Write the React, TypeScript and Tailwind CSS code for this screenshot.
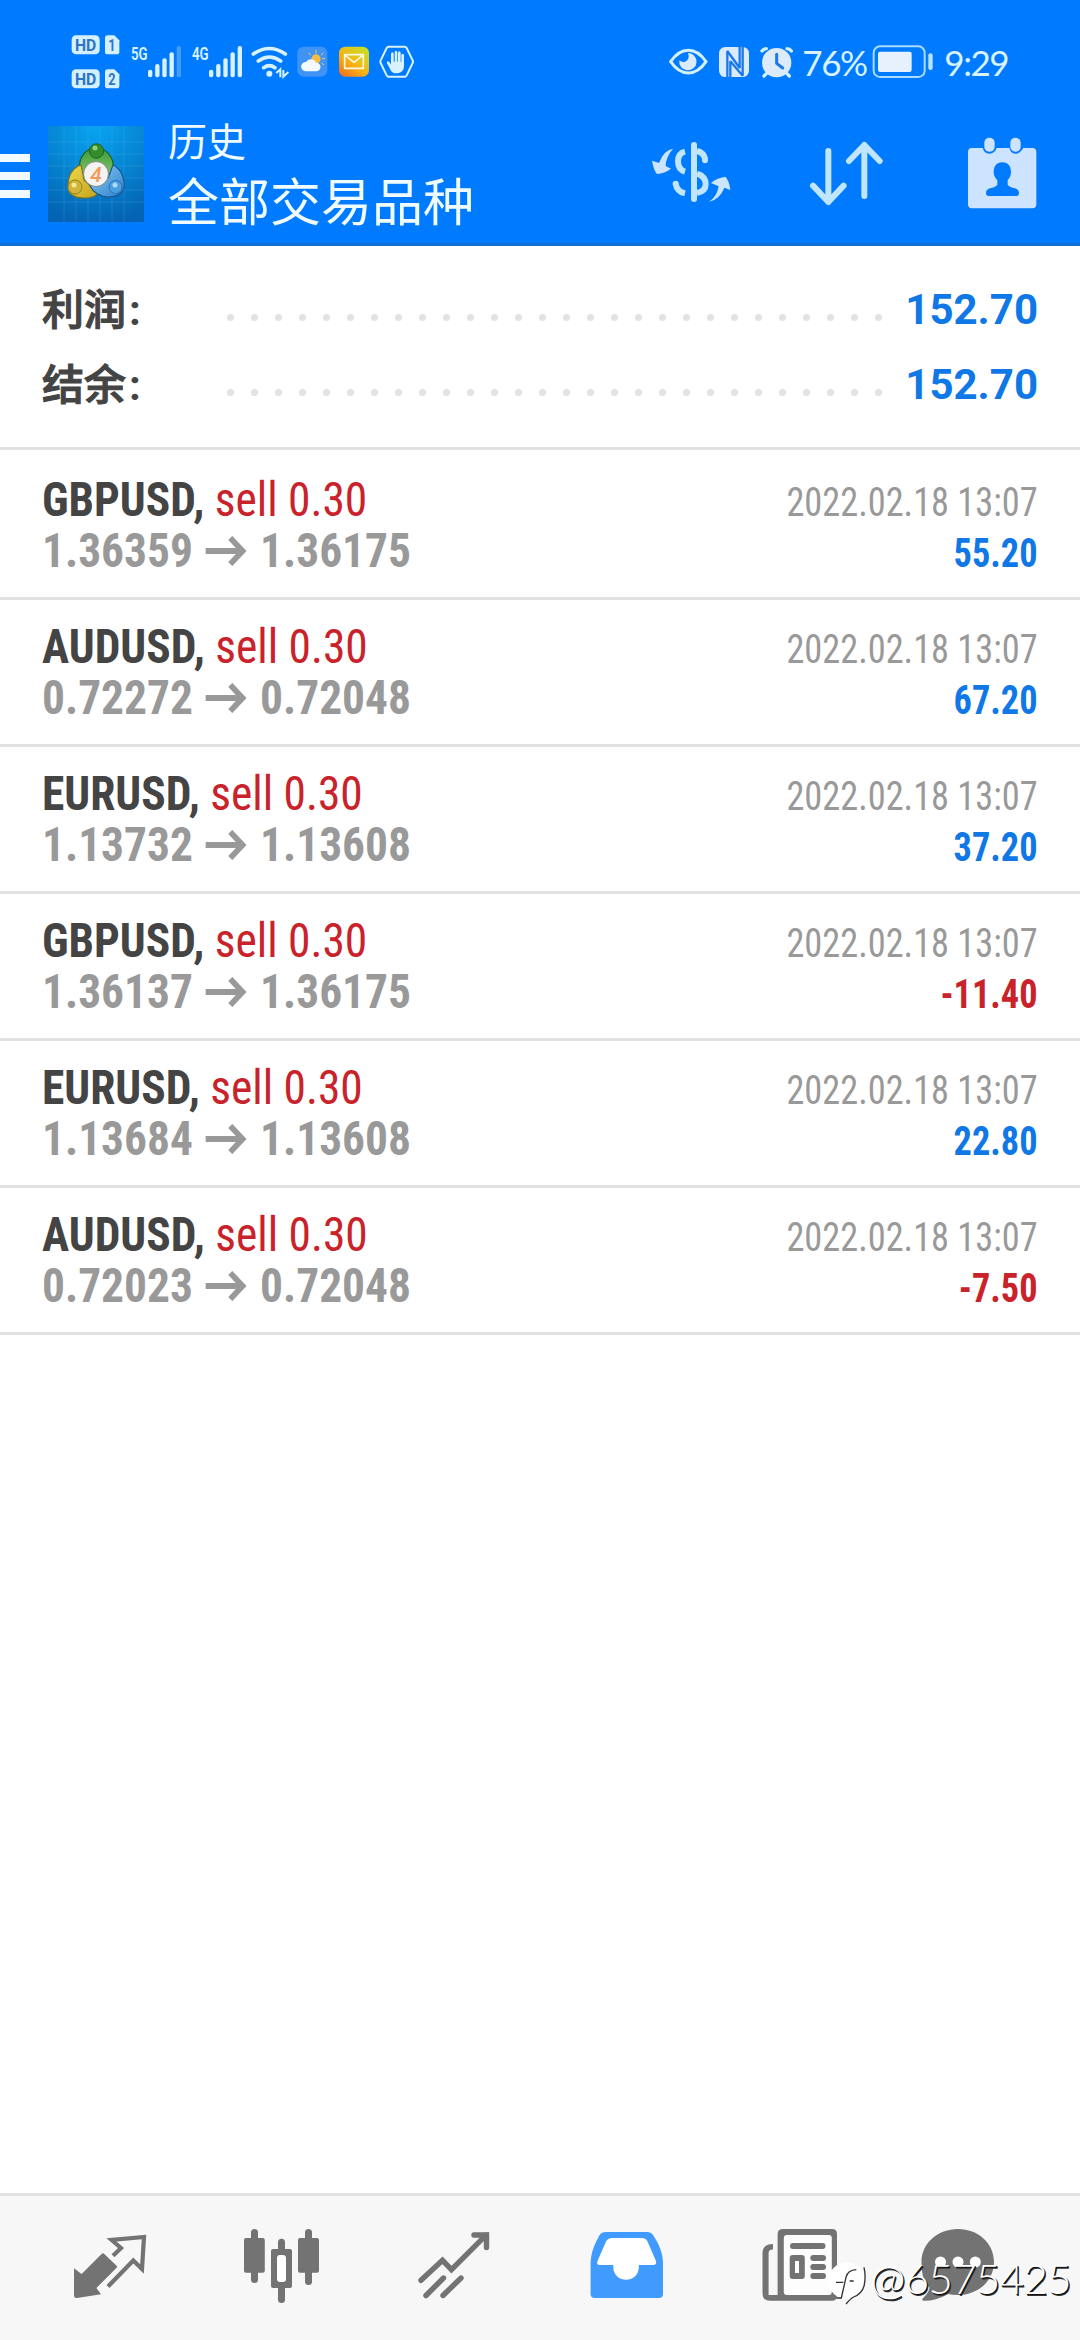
import React from "react";

interface Deal {
  symbol: string;
  volume: string;
  open: string;
  close: string;
  time: string;
  profit: string;
}

const deals: Deal[] = [
  { symbol: "GBPUSD", volume: "0.30", open: "1.36359", close: "1.36175", time: "2022.02.18 13:07", profit: "55.20" },
  { symbol: "AUDUSD", volume: "0.30", open: "0.72272", close: "0.72048", time: "2022.02.18 13:07", profit: "67.20" },
  { symbol: "EURUSD", volume: "0.30", open: "1.13732", close: "1.13608", time: "2022.02.18 13:07", profit: "37.20" },
  { symbol: "GBPUSD", volume: "0.30", open: "1.36137", close: "1.36175", time: "2022.02.18 13:07", profit: "-11.40" },
  { symbol: "EURUSD", volume: "0.30", open: "1.13684", close: "1.13608", time: "2022.02.18 13:07", profit: "22.80" },
  { symbol: "AUDUSD", volume: "0.30", open: "0.72023", close: "0.72048", time: "2022.02.18 13:07", profit: "-7.50" },
];

const totals = [
  { label: "利润", value: "152.70" },
  { label: "结余", value: "152.70" },
];

function SimBadge({ slot }: { slot: string }) {
  return (
    <svg className="overflow-visible" width="49" height="20" viewBox="0 0 147 60">
      <rect x="2" y="1" width="84" height="57" rx="13" fill="#d3f0ff" />
      <text x="44" y="49" textAnchor="middle" fontSize="52" fontWeight="700" textLength="64" lengthAdjust="spacingAndGlyphs" fill="#2f74c8">HD</text>
      <path d="M110 1h20l15 15v34q0 8-8 8h-27q-8 0-8-8V9q0-8 8-8z" fill="#d3f0ff" />
      <text x="123" y="47" textAnchor="middle" fontSize="48" fontWeight="700" textLength="22" lengthAdjust="spacingAndGlyphs" fill="#2f74c8">{slot}</text>
    </svg>
  );
}

function Signal({ label, level }: { label: string; level: number }) {
  const tops = [74, 57, 40, 22, 3];
  return (
    <svg className="overflow-visible" width="52" height="34" viewBox="0 0 156 102">
      <text x="0" y="45" fontSize="56" fontWeight="600" textLength="50" lengthAdjust="spacingAndGlyphs" fill="#d8f3ff">{label}</text>
      {tops.map((top, i) => (
        <rect key={i} x={51 + i * 21.5} y={top} width="13" height={97 - top} rx="6" fill="#d8f3ff" opacity={i < level ? 1 : 0.3} />
      ))}
    </svg>
  );
}

function StatusBar() {
  return (
    <div className="flex h-[110px] items-center pt-[14px] pr-[72px] pl-[71px] font-['Lato','Noto_Sans',sans-serif] text-[#d8f3ff]">
      <div className="flex flex-col gap-[14px] font-['Roboto',sans-serif]">
        <SimBadge slot="1" />
        <SimBadge slot="2" />
      </div>
      <div className="ml-[11px] flex gap-[9px] font-['Roboto',sans-serif]">
        <Signal label="5G" level={4} />
        <Signal label="4G" level={5} />
      </div>
      {/* wifi */}
      <svg className="ml-[7px]" width="39" height="34" viewBox="602 73 117 102" fill="none" stroke="#d8f3ff" strokeWidth="11" strokeLinecap="round">
        <path d="M609 100q48-33 96 0M624 121q33-24 67 0M640 141q17-12 34 0" />
        <circle cx="657" cy="159" r="9" fill="#d8f3ff" stroke="none" />
        <path d="M678 157l12-11v24M699 148v20l15-14" strokeWidth="6" strokeLinecap="butt" />
      </svg>
      {/* weather */}
      <svg className="ml-[7px]" width="31" height="34" viewBox="740 73 93 102">
        <rect x="741" y="78" width="90" height="90" rx="19" fill="#3f93f5" />
        <g stroke="#f3c85a" strokeWidth="3" strokeLinecap="round">
          <path d="M797 89v8M776 97l5 6M818 97l-5 6M823 114h-7M820 132l-6-4" />
        </g>
        <circle cx="797" cy="115" r="14" fill="#f6bd45" />
        <path d="M766 152a14 14 0 0 1 1-28 17 17 0 0 1 30 2 13 13 0 0 1 1 26z" fill="#f3fbff" />
      </svg>
      {/* mail */}
      <svg className="ml-[10px]" width="32" height="34" viewBox="864 73 96 102">
        <defs>
          <linearGradient id="mail" x1="0" y1="1" x2="0.8" y2="0">
            <stop offset="0" stopColor="#f26a1e" />
            <stop offset="0.5" stopColor="#f8b414" />
            <stop offset="1" stopColor="#c5df28" />
          </linearGradient>
        </defs>
        <rect x="867" y="78" width="90" height="90" rx="19" fill="url(#mail)" />
        <path d="M884 102h56v41h-56zM886 104l26 21 26-21" fill="none" stroke="#fffbe0" strokeWidth="5" strokeLinejoin="round" />
      </svg>
      {/* blocked */}
      <svg className="ml-[9px]" width="35" height="34" viewBox="985 73 105 102">
        <path d="M1014 78h48q4 0 6 4l18 37q2 4 0 8l-18 37q-2 4-6 4h-48q-4 0-6-4l-18-37q-2-4 0-8l18-37q2-4 6-4z" fill="none" stroke="#d8f3ff" strokeWidth="6" />
        <path d="M1021 134v-33q0-6 4-6t4 6v22h3V95q0-5 4-5t4 5v28h2V97q0-5 4-5t4 5v27h2v-20q0-5 4-5t4 5v32q0 22-22 22-12 0-17-8l-12-22q-2-6 3-6 4 0 9 10z" fill="#d8f3ff" />
      </svg>

      <div className="ml-auto flex items-center">
        {/* eye */}
        <svg width="39" height="34" viewBox="56 72 117 102">
          <path d="M61 122q23-34 53-34t53 34q-23 34-53 34t-53-34z" fill="none" stroke="#d3f0ff" strokeWidth="9" />
          <path d="M114 96a26 26 0 1 1-27 22q12 9 22 1t4-23z" fill="#dcebfc" />
        </svg>
        {/* nfc */}
        <svg className="ml-[10px]" width="32" height="34" viewBox="203 72 96 102">
          <rect x="206" y="78" width="90" height="90" rx="19" fill="#dcebfc" />
          <path d="M231 168V90l37 51V78M240 168v-47l37 43V78" fill="none" stroke="#1a79ef" strokeWidth="7" strokeLinejoin="bevel" />
        </svg>
        {/* alarm */}
        <svg className="ml-[9px]" width="36" height="34" viewBox="325 72 108 102" strokeLinecap="round">
          <circle cx="378" cy="125" r="44" fill="#dcebfc" />
          <path d="M347 158l-7 7M409 158l7 7M334 90q5-7 13-7M422 90q-5-7-13-7" stroke="#d3f0ff" strokeWidth="10" fill="none" />
          <path d="M378 100v27l18 14" fill="none" stroke="#1a79ef" strokeWidth="9" />
        </svg>
        <span className="ml-[7px] w-[64px] text-[35px] leading-[32px] tracking-[-1.5px]">76%</span>
        {/* battery */}
        <svg className="ml-[6px]" width="62" height="34" viewBox="663 74 186 102">
          <rect x="668" y="78" width="153" height="92" rx="19" fill="none" stroke="#a8dcff" strokeWidth="6" />
          <rect x="681" y="94" width="101" height="61" rx="6" fill="#e6f1fd" />
          <rect x="832" y="99" width="13" height="50" rx="6" fill="#b8e4ff" />
        </svg>
        <span className="ml-[10px] text-[35px] leading-[32px] tracking-[-1.5px]">9:29</span>
      </div>
    </div>
  );
}

function AppLogo() {
  return (
    <svg width="96" height="96" viewBox="0 0 96 96">
      <defs>
        <radialGradient id="sky" cx="0.5" cy="0" r="1">
          <stop offset="0" stopColor="#08a4f2" />
          <stop offset="0.55" stopColor="#0683d0" />
          <stop offset="1" stopColor="#0463b4" />
        </radialGradient>
        <linearGradient id="green" x1="0" y1="0" x2="0" y2="1">
          <stop offset="0" stopColor="#3d9a34" />
          <stop offset="1" stopColor="#8ccb74" />
        </linearGradient>
        <linearGradient id="gold" x1="0" y1="0" x2="1" y2="1">
          <stop offset="0" stopColor="#efd94b" />
          <stop offset="1" stopColor="#c3a31c" />
        </linearGradient>
        <linearGradient id="blue" x1="0" y1="0" x2="1" y2="1">
          <stop offset="0" stopColor="#8fcdf5" />
          <stop offset="1" stopColor="#2a7fcd" />
        </linearGradient>
      </defs>
      <rect width="96" height="96" fill="url(#sky)" />
      <path d="M16 0v96M28 0v96M40 0v96M52 0v96M64 0v96M76 0v96M0 16h96M0 28h96M0 40h96M0 52h96M0 64h96M0 76h96" stroke="#5fc3f5" strokeWidth="0.6" opacity="0.35" />
      <path d="M31 45c0-15 7-23 17-23s18 8 18 23l-5 8H36z" fill="url(#green)" stroke="#17612c" strokeWidth="1.2" />
      <path d="M33 39c-9 3-13 11-13 22 0 8 8 11 16 11 7 0 12-2 14-5L36 54z" fill="url(#gold)" stroke="#7f7420" strokeWidth="1.2" />
      <path d="M65 39c8 4 12 13 11 22-1 7-8 10-15 10-9 0-16-5-19-11l18-8z" fill="url(#blue)" stroke="#15568f" strokeWidth="1.2" />
      <circle cx="48.500" cy="25" r="7.200" fill="#348d2d" stroke="#1d6425" />
      <circle cx="47" cy="22" r="2.500" fill="#91cf7f" />
      <circle cx="27" cy="61" r="7" fill="#d3b43a" stroke="#92801f" />
      <circle cx="26" cy="59" r="2.500" fill="#f4e692" />
      <circle cx="67.500" cy="61" r="6.500" fill="#4a9fe0" stroke="#2672b4" />
      <circle cx="67" cy="59" r="2.500" fill="#b0dcf9" />
      <circle cx="48" cy="48" r="12.500" fill="#f5f4f3" stroke="#7f8a86" strokeWidth="1" />
      <text x="48" y="55.500" textAnchor="middle" fontSize="21" fontWeight="500" fontStyle="italic" fontFamily="Roboto" fill="#f29a5c">4</text>
    </svg>
  );
}

function Header() {
  return (
    <header className="h-[246px] border-b-[3px] border-[#1470d2] bg-[#007aff]">
      <StatusBar />
      <div className="flex h-[133px] items-start">
        <div className="mt-[44px] flex w-[30px] flex-col gap-[10px]">
          <div className="h-2 bg-[#f0faff]" />
          <div className="h-2 bg-[#f0faff]" />
          <div className="h-2 bg-[#f0faff]" />
        </div>
        <div className="mt-4 ml-[18px]">
          <AppLogo />
        </div>
        <div className="mt-[4px] ml-[24px] flex flex-col font-['Noto_Sans_CJK_SC',sans-serif] text-[#f0fbff]">
          <span className="text-[39px] leading-[50px]">历史</span>
          <span className="mt-[2px] text-[51px] leading-[66px]">全部交易品种</span>
        </div>
        {/* currency swap */}
        <svg className="mt-[31px] ml-auto" width="80" height="62" viewBox="60 63 240 186" fill="none" stroke="#bfe5ff" strokeWidth="18">
          <path d="M189 75v162" strokeLinecap="round" />
          <path d="M162 95q-21 5-21 29 0 25 21 31M134 191q4 24 28 29" />
          <path d="M198 93q20 4 25 26M198 161q26 8 26 32 0 21-26 26" />
          <circle cx="222" cy="121" r="9" fill="#bfe5ff" stroke="none" />
          <circle cx="134" cy="191" r="9" fill="#bfe5ff" stroke="none" />
          <path d="M126 86q-28 4-42 43l-21-7q5 29 15 40 23-2 42-16l-16-8q0-26 22-52z" fill="#cbe5ff" stroke="none" />
          <path d="M234 245q24-14 29-46l-23-10q16-15 43-19 12 12 15 40l-18-7q-14 36-46 42z" fill="#cbe5ff" stroke="none" />
        </svg>
        {/* sort */}
        <svg className="mt-[31px] ml-[78px]" width="76" height="66" viewBox="536 63 228 198" fill="none" stroke="#bfe5ff" strokeWidth="18" strokeLinecap="round" strokeLinejoin="round">
          <path d="M594 93v153M548 197l46 49 46-49M702 228V75M656 123l46-48 46 48" />
        </svg>
        {/* period */}
        <svg className="mt-[26px] mr-[41px] ml-[82px]" width="72" height="76" viewBox="1010 48 216 228">
          <path d="M1025 84h32q4 17 20 17t22-17h38q4 17 18 17t24-17h27q12 0 12 12v157q0 12-12 12h-181q-12 0-12-12V96q0-12 12-12z" fill="#cce4ff" />
          <rect x="1062" y="53" width="31" height="42" rx="15" fill="#cce4ff" />
          <rect x="1140" y="53" width="31" height="42" rx="15" fill="#cce4ff" />
          <path d="M1116 127c17 0 26 12 26 29 0 13-6 19-10 25v13q6 8 22 11 12 3 12 14 0 9-8 9h-83q-8 0-8-9 0-11 12-14 16-3 22-11v-13c-4-6-11-12-11-25 0-17 9-29 26-29z" fill="#007aff" />
        </svg>
      </div>
    </header>
  );
}

function Summary() {
  return (
    <section className="h-[204px] border-b-[3px] border-[#e2e2e2] pt-[26px] pr-[42px] pl-[42px]">
      {totals.map((row) => (
        <div key={row.label} className="flex h-[75px] items-center">
          <div className="flex w-[176px] items-center gap-[3px] pt-px font-['Roboto','Noto_Sans_CJK_SC',sans-serif] text-[42px] text-[#444]">
            <span className="font-medium [-webkit-text-stroke:1.1px_#444]">{row.label}</span>
            <span className="font-bold">:</span>
          </div>
          <div className="mt-[15px] flex w-[672px] justify-around">
            {Array.from({ length: 28 }, (_, i) => (
              <span key={i} className="size-[7px] rounded-full bg-[#e2e2e2]" />
            ))}
          </div>
          <span className="ml-auto font-['Roboto',sans-serif] text-[42px] font-bold text-[#0f78e6]">{row.value}</span>
        </div>
      ))}
    </section>
  );
}

function DealRow({ deal }: { deal: Deal }) {
  const isLoss = deal.profit.startsWith("-");
  return (
    <li className="flex h-[147px] justify-between border-b-[3px] border-[#e2e2e2] px-[42px] pt-[21px]">
      <div className="origin-left scale-x-[0.946] text-[48px] leading-[51px] whitespace-nowrap">
        <div className="text-[#c9222a]">
          <span className="font-bold text-[#444]">{deal.symbol},</span> sell {deal.volume}
        </div>
        <div className="flex items-center font-bold text-[#999]">
          {deal.open}
          <svg className="mr-[14px] ml-[12px]" width="45" height="30" viewBox="0 0 45 30" fill="none" stroke="#999" strokeWidth="6">
            <path d="M1 15h39M27 2l13 13-13 13" />
          </svg>
          {deal.close}
        </div>
      </div>
      <div className="origin-right scale-x-[0.908] pt-[3px] text-right text-[40px] leading-[51px] whitespace-nowrap">
        <div className="text-[#999]">{deal.time}</div>
        <div className={isLoss ? "font-bold text-[#c9222a]" : "font-bold text-[#0f78e6]"}>{deal.profit}</div>
      </div>
    </li>
  );
}

function TabBar() {
  return (
    <nav className="relative flex h-[147px] border-t-[3px] border-[#e2e2e2] bg-[#f7f7f7] pt-[30px] pl-[70px] text-[#737373]">
      {/* quotes */}
      <svg width="78" height="80" viewBox="70 46 78 80">
        <path d="M74 88.300l7.600 5.700 20-20q1.400-1.300 2.700 0l12.300 11.700q1 1 0 2l-20.200 20.300 4.600 6.300L77 118q-3 .3-3-2.500z" fill="currentColor" />
        <path d="M113 75.700l8-7.700-9.400-8L144 57l-2 32-8.700-8.500-25.300 26" fill="none" stroke="currentColor" strokeWidth="4.200" />
      </svg>
      {/* charts */}
      <svg className="ml-[92px]" width="84" height="80" viewBox="240 46 84 80" fill="currentColor">
        <rect x="244" y="58" width="20.800" height="34.700" rx="2" />
        <rect x="251" y="49" width="7" height="54" rx="3.500" />
        <rect x="271" y="69" width="21" height="39" rx="2" />
        <rect x="278" y="58.700" width="7" height="64.300" rx="3.500" />
        <rect x="277" y="75" width="9" height="27" rx="3" fill="#fff" />
        <rect x="298" y="58" width="21" height="34.700" rx="2" />
        <rect x="305" y="49" width="7" height="56" rx="3.500" />
      </svg>
      {/* trade */}
      <svg className="ml-[92px]" width="78" height="80" viewBox="416 46 78 80" fill="none" stroke="currentColor" strokeWidth="5.400" strokeLinecap="round">
        <path d="M421 100.300l21.500-20 9 9.400 34-34M474 55h12.500v12.500M426 115.500l17.500-17.500M443 115.500l18-17.500" />
        <path d="M484 52.500h5v8z" fill="currentColor" stroke="none" />
      </svg>
      {/* history, active */}
      <svg className="ml-[92px]" width="82" height="80" viewBox="46 46 82 80">
        <path d="M66 52h41q4 0 6 3c6 9 10 18 10 29v30q0 4-4 4H54.600q-4 0-4-4V84c0-11 4-20 9-29q2-3 6.400-3z" fill="#419bff" />
        <path d="M72 58h30q4 0 5.500 3.500L116 81q1 4-3 4H98.800v2c0 17-25.500 17-25.500 0v-2H60q-4 0-2.500-4L66 61.500Q68 58 72 58z" fill="#fff" />
      </svg>
      {/* news */}
      <svg className="ml-[92px]" width="82" height="80" viewBox="220 46 82 80">
        <path d="M243 49h49q5 0 5 5v62q0 4.700-5 4.700h-62q-7.500 0-7.500-7.500V73q0-9 10.500-9v5.500q-4.400-.3-4.400 3.500v42h9V54q0-5 5.400-5z" fill="currentColor" />
        <rect x="243.800" y="55" width="48" height="60" rx="3" fill="#fdfdfd" />
        <g fill="currentColor">
          <rect x="250" y="63" width="35.500" height="6" rx="3" />
          <rect x="249.700" y="75" width="15.100" height="24" rx="3" />
          <rect x="270.300" y="75" width="15.700" height="6" rx="3" />
          <rect x="270.300" y="84" width="15.700" height="6" rx="3" />
          <rect x="270.300" y="93" width="15.700" height="6" rx="3" />
        </g>
        <rect x="255" y="81" width="4" height="12" fill="#fff" />
      </svg>
      {/* messages */}
      <svg className="ml-[76px]" width="80" height="80" viewBox="378 46 80 80">
        <path d="M418 49c20 0 36 14 36 33s-16 33-36 33q-6 0-10-1-12 7-24 6.800-3-.4-1-2.600 6-6 6.500-10.500c-6-6-8-14-8-25.700 0-19 16.500-33 36.500-33z" fill="currentColor" />
        <circle cx="400.500" cy="82" r="5.500" fill="#fff" />
        <circle cx="418" cy="82" r="5.500" fill="#fff" />
        <circle cx="435.300" cy="82" r="5.500" fill="#fff" />
      </svg>

      {/* watermark */}
      <div className="absolute right-[9px] bottom-[34px] flex items-start gap-[3px]">
        <svg width="40" height="46" viewBox="24 90 120 138">
          <circle cx="83" cy="152" r="55" fill="#fff" />
          <path d="M52 204h15l14-62q5-22 31-23M51 157h22M92 153h12M135 112q6 25 1 52-5 26-32 37-10 5-23 21" fill="none" stroke="#333" strokeWidth="4" />
        </svg>
        <span className="font-['Lato',sans-serif] text-[42px] leading-[36px] font-light tracking-[-0.6px] text-white [text-shadow:1px_1px_0_#111,1.5px_1.5px_0_#333]">@6575425</span>
      </div>
    </nav>
  );
}

export default function App() {
  return (
    <div className="flex h-[2340px] w-[1080px] flex-col overflow-hidden bg-white">
      <Header />
      <Summary />
      <ul className="flex-1 pt-[3px] font-['Roboto_Condensed','Roboto',sans-serif] [font-stretch:75%]">
        {deals.map((deal, i) => (
          <DealRow key={i} deal={deal} />
        ))}
      </ul>
      <TabBar />
    </div>
  );
}
